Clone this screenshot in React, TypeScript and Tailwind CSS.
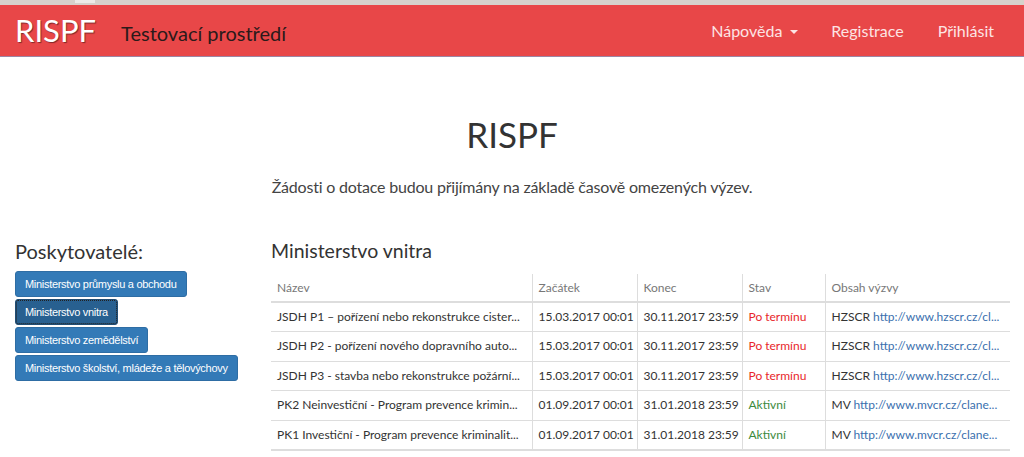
import React from "react";

type Row = {
  name: string;
  start: string;
  end: string;
  status: "late" | "active";
  org: string;
  url: string;
};

const rows: Row[] = [
  { name: "JSDH P1 – pořízení nebo rekonstrukce cister...", start: "15.03.2017 00:01", end: "30.11.2017 23:59", status: "late", org: "HZSCR", url: "http://www.hzscr.cz/cl..." },
  { name: "JSDH P2 - pořízení nového dopravního auto...", start: "15.03.2017 00:01", end: "30.11.2017 23:59", status: "late", org: "HZSCR", url: "http://www.hzscr.cz/cl..." },
  { name: "JSDH P3 - stavba nebo rekonstrukce požární...", start: "15.03.2017 00:01", end: "30.11.2017 23:59", status: "late", org: "HZSCR", url: "http://www.hzscr.cz/cl..." },
  { name: "PK2 Neinvestiční - Program prevence krimin...", start: "01.09.2017 00:01", end: "31.01.2018 23:59", status: "active", org: "MV", url: "http://www.mvcr.cz/clane..." },
  { name: "PK1 Investiční - Program prevence kriminalit...", start: "01.09.2017 00:01", end: "31.01.2018 23:59", status: "active", org: "MV", url: "http://www.mvcr.cz/clane..." },
];

const providers = [
  { label: "Ministerstvo průmyslu a obchodu", active: false },
  { label: "Ministerstvo vnitra", active: true },
  { label: "Ministerstvo zemědělství", active: false },
  { label: "Ministerstvo školství, mládeže a tělovýchovy", active: false },
];

export default function App() {
  return (
    <div className="h-[457px] w-[1024px] overflow-hidden bg-white text-[#333]" style={{ fontFamily: "Lato, 'Open Sans', sans-serif" }}>
      {/* browser chrome strip */}
      <div className="flex h-[5px] bg-[#d6d2cc]">
        <div className="ml-[75px] h-[3px] w-[20px] bg-[#ecebe8]" />
      </div>
      {/* navbar */}
      <nav className="flex h-[52px] items-center border-b border-[#9c86a4] bg-[#e84748] px-[15px]">
        <span className="text-[31px] leading-none text-white [text-shadow:1px_1px_1px_rgba(0,0,0,0.45)]">RISPF</span>
        <span className="ml-[25px] mt-[5px] text-[20px] leading-none text-[#2b1a1a]">Testovací prostředí</span>
        <div className="ml-auto flex items-center pr-[15px] text-[16px] text-[#fde4e4]">
          <span className="flex items-center px-[15px]">
            Nápověda
            <span className="ml-[8px] mt-[2px] h-0 w-0 border-x-[4px] border-t-[4px] border-x-transparent border-t-[#fde4e4]" />
          </span>
          <span className="px-[18px]">Registrace</span>
          <span className="pl-[16px]">Přihlásit</span>
        </div>
      </nav>

      {/* jumbotron */}
      <div className="flex flex-col items-center pt-[60px]">
        <h1 className="text-[35px] leading-none text-[#333]">RISPF</h1>
        <p className="mt-[27px] text-[16px] leading-none tracking-[-0.2px] text-[#444]">
          Žádosti o dotace budou přijímány na základě časově omezených výzev.
        </p>
      </div>

      {/* content */}
      <div className="mt-[43px] flex px-[15px]">
        <div className="w-[226px] shrink-0">
          <h3 className="text-[20px] leading-[26px] text-[#333]">Poskytovatelé:</h3>
          <div className="mt-[7px] flex flex-col items-start gap-[2px]" style={{ fontFamily: "'Liberation Sans', Arial, sans-serif" }}>
            {providers.map((p) => (
              <button
                key={p.label}
                className={
                  p.active
                    ? "h-[26px] whitespace-nowrap rounded-[3px] border border-[#204d74] bg-[#286090] px-[9px] text-[11px] tracking-[-0.3px] text-white outline-1 outline-dotted outline-[#222] -outline-offset-2"
                    : "h-[26px] whitespace-nowrap rounded-[3px] border border-[#2e6da4] bg-[#337ab7] px-[9px] text-[11px] tracking-[-0.3px] text-white"
                }
              >
                {p.label}
              </button>
            ))}
          </div>
        </div>

        <div className="ml-[30px] flex-1">
          <h3 className="text-[19.5px] leading-[26px] text-[#333]">Ministerstvo vnitra</h3>
          <table className="mt-[10px] w-[739px] table-fixed border-collapse text-[12px] leading-[18px]">
            <colgroup>
              <col className="w-[261px]" />
              <col className="w-[105px]" />
              <col className="w-[105px]" />
              <col className="w-[83px]" />
              <col className="w-[185px]" />
            </colgroup>
            <thead>
              <tr className="border-b-2 border-[#ddd] text-left text-[#777]">
                <th className="h-[28px] px-[6px] font-normal">Název</th>
                <th className="border-l border-[#ddd] px-[6px] font-normal">Začátek</th>
                <th className="border-l border-[#ddd] px-[6px] font-normal">Konec</th>
                <th className="border-l border-[#ddd] px-[6px] font-normal">Stav</th>
                <th className="border-l border-[#ddd] px-[6px] font-normal">Obsah výzvy</th>
              </tr>
            </thead>
            <tbody className="text-[#333]">
              {rows.map((r, i) => (
                <tr key={i} className="border-t border-[#ddd] last:border-b-2">
                  <td className="h-[29.5px] overflow-hidden whitespace-nowrap px-[6px]">{r.name}</td>
                  <td className="overflow-hidden whitespace-nowrap border-l border-[#ddd] px-[6px]">{r.start}</td>
                  <td className="overflow-hidden whitespace-nowrap border-l border-[#ddd] px-[6px]">{r.end}</td>
                  <td className={"overflow-hidden whitespace-nowrap border-l border-[#ddd] px-[6px] " + (r.status === "late" ? "text-[#e8262b]" : "text-[#3c8a3c]")}>
                    {r.status === "late" ? "Po termínu" : "Aktivní"}
                  </td>
                  <td className="overflow-hidden whitespace-nowrap border-l border-[#ddd] px-[6px]">
                    {r.org} <span className="text-[#3a6fae]">{r.url}</span>
                  </td>
                </tr>
              ))}
            </tbody>
          </table>
        </div>
      </div>
    </div>
  );
}
